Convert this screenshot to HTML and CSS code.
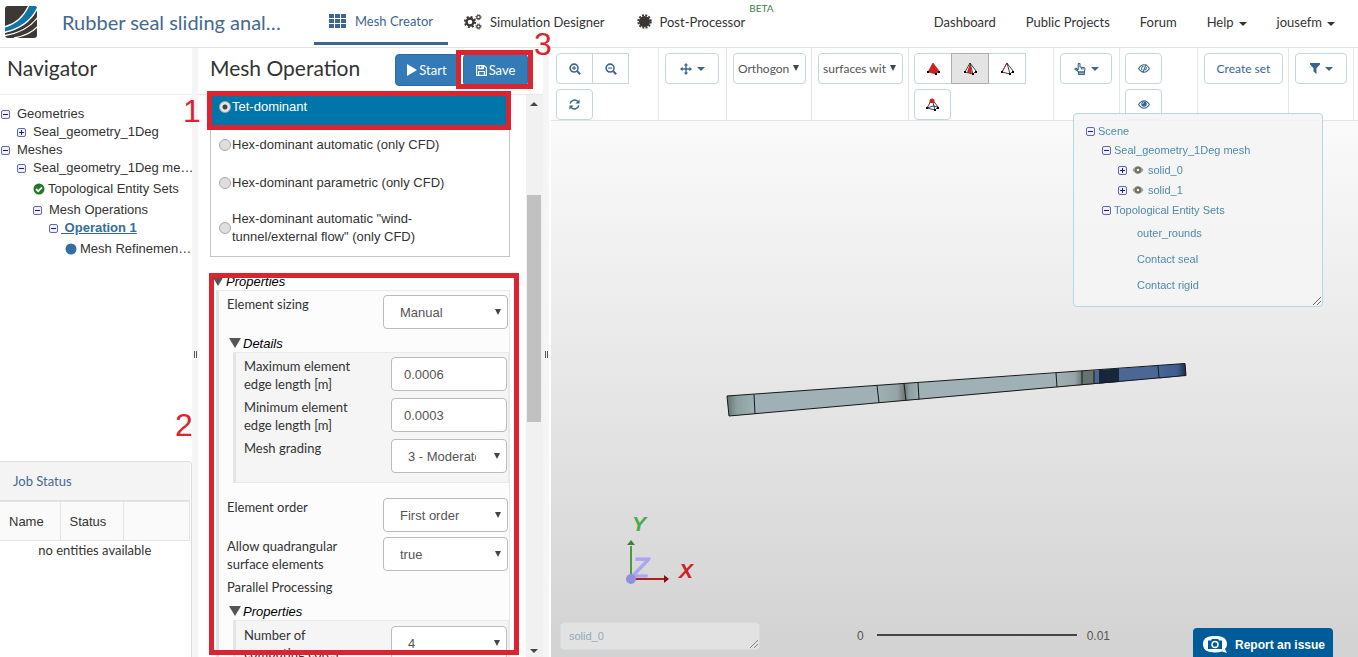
FILE: index.html
```html
<!DOCTYPE html>
<html lang="en">
<head>
<meta charset="utf-8">
<title>Mesh Creator</title>
<link rel="stylesheet" href="styles.css">
</head>
<body>
<svg class="defs" aria-hidden="true">
  <symbol id="minus" viewBox="0 0 9 9"><rect x=".5" y=".5" width="8" height="8" rx="1.5" fill="#eef0fb" stroke="#6668a8"/><path d="M2 4.5h5" stroke="#1d1d80"/></symbol>
  <symbol id="plus" viewBox="0 0 9 9"><rect x=".5" y=".5" width="8" height="8" rx="1.5" fill="#eef0fb" stroke="#6668a8"/><path d="M2 4.5h5M4.5 2v5" stroke="#1d1d80"/></symbol>
  <symbol id="eye" viewBox="0 0 14 10"><path d="M.6 5Q3.500.7 7 .7T13.400 5Q10.500 9.300 7 9.300T.6 5z" fill="none" stroke="currentColor" stroke-width="1.200"/><circle cx="7" cy="4.500" r="3.200" fill="currentColor"/><path d="M5.300 4.300A1.800 1.800 0 0 1 7 2.700" fill="none" stroke="#fff" stroke-width=".8"/></symbol>
  <symbol id="eye-solid" viewBox="0 0 14 10"><path d="M0 5Q3.500 0 7 0T14 5Q10.500 10 7 10T0 5z" fill="#a5a598"/><circle cx="7" cy="5" r="4" fill="#6f6f64"/><circle cx="7" cy="5" r="1.600" fill="#f2f2ee"/></symbol>
</svg>
<div class="app">
  <header class="topbar">
    <svg class="logo" viewBox="0 0 32 32"><defs><clipPath id="lc"><rect width="32" height="32" rx="3"/></clipPath></defs>
      <g clip-path="url(#lc)"><rect width="32" height="32" fill="#3d3835"/><path d="M24 -1Q16 17 -1 21V27Q24 21 33 1V-1z" fill="#1175a8"/>
      <g fill="none" stroke="#fff" stroke-width="1.300"><path d="M24 -1Q16 17 -1 21"/><path d="M33 1Q24 21 -1 26.500"/><path d="M33 11Q22 26 0 29.500"/><path d="M33 20Q25 29 9 32"/></g></g></svg>
    <a class="project" href="#">Rubber seal sliding anal…</a>
    <nav class="tabs">
      <a class="tab tab-mesh active" href="#"><svg width="17" height="14" viewBox="0 0 17 14" fill="#3b6690"><path d="M0 0h5v4H0zM6 0h5v4H6zM12 0h5v4h-5zM0 5h5v4H0zM6 5h5v4H6zM12 5h5v4h-5zM0 10h5v4H0zM6 10h5v4H6zM12 10h5v4h-5z"/></svg>Mesh Creator</a>
      <a class="tab tab-sim" href="#"><svg width="18" height="16" viewBox="0 0 18 16" fill="none" stroke="#3a3532"><circle cx="6" cy="8" r="3.500" stroke-width="2.400"/><circle cx="6" cy="8" r="5.200" stroke-width="1.800" stroke-dasharray="2.040 2.040"/><circle cx="14.500" cy="3.200" r="1.700" stroke-width="1.200"/><circle cx="14.500" cy="3.200" r="2.600" stroke-width="1" stroke-dasharray="1.020 1.020"/><circle cx="14.500" cy="12.500" r="1.700" stroke-width="1.200"/><circle cx="14.500" cy="12.500" r="2.600" stroke-width="1" stroke-dasharray="1.020 1.020"/></svg>Simulation Designer</a>
      <a class="tab tab-post" href="#"><svg width="15" height="15" viewBox="0 0 15 15"><circle cx="7.500" cy="7.500" r="5.600" fill="#3a3532"/><circle cx="7.500" cy="7.500" r="6.300" fill="none" stroke="#3a3532" stroke-width="1.800" stroke-dasharray="1.980 1.320"/></svg>Post-Processor<sup class="beta">BETA</sup></a>
    </nav>
    <nav class="links">
      <a href="#">Dashboard</a><a href="#">Public Projects</a><a href="#">Forum</a><a href="#">Help<i class="caret"></i></a><a href="#">jousefm<i class="caret"></i></a>
    </nav>
  </header>
  <main class="work">
    <aside class="side">
      <h1 class="heading">Navigator</h1>
      <div class="tree">
        <div class="node l0"><svg class="box"><use href="#minus"/></svg>Geometries</div>
        <div class="node l1"><svg class="box"><use href="#plus"/></svg>Seal_geometry_1Deg</div>
        <div class="node l0"><svg class="box"><use href="#minus"/></svg>Meshes</div>
        <div class="node l1"><svg class="box"><use href="#minus"/></svg>Seal_geometry_1Deg me…</div>
        <div class="node l2 leaf"><svg class="dot" viewBox="0 0 12 12"><circle cx="6" cy="6" r="5.500" fill="#1c7a24"/><path d="M3 6l2.200 2.200L9 4.300" fill="none" stroke="#fff" stroke-width="1.800"/></svg>Topological Entity Sets</div>
        <div class="node l2"><svg class="box"><use href="#minus"/></svg>Mesh Operations</div>
        <div class="node l3"><svg class="box"><use href="#minus"/></svg><a class="current" href="#">&nbsp;Operation 1</a></div>
        <div class="node l4 leaf"><svg class="dot" viewBox="0 0 12 12"><circle cx="6" cy="6" r="5.500" fill="#336da5"/></svg>Mesh Refinemen…</div>
      </div>
      <section class="jobs">
        <h2 class="jobs-title">Job Status</h2>
        <table class="jobs-table">
          <thead><tr><th class="c-name">Name</th><th class="c-status">Status</th><th></th></tr></thead>
          <tbody><tr><td colspan="3">no entities available</td></tr></tbody>
        </table>
      </section>
    </aside>
    <div class="splitter"><i></i></div>
    <section class="operation">
      <div class="op-head">
        <h1>Mesh Operation</h1>
        <button class="primary start"><svg width="10" height="12" viewBox="0 0 10 12"><path d="M0 0l10 6L0 12z" fill="#fff"/></svg>Start</button>
        <button class="primary save"><svg width="11" height="11" viewBox="0 0 11 11" fill="none" stroke="#fff" stroke-width="1.200"><path d="M.6.6h7.600l2.200 2.200v7.600H.6z"/><path d="M2.600 10V6.500h5.800V10M3 .6v3h4.400v-3M6 1v2"/></svg>Save</button>
      </div>
      <div class="op-body">
        <div class="op-scroll">
          <div class="types">
            <label class="type selected"><input type="radio" name="t" checked>Tet-dominant</label>
            <label class="type"><input type="radio" name="t">Hex-dominant automatic (only CFD)</label>
            <label class="type"><input type="radio" name="t">Hex-dominant parametric (only CFD)</label>
            <label class="type two"><input type="radio" name="t"><span>Hex-dominant automatic "wind-<br>tunnel/external flow" (only CFD)</span></label>
          </div>
          <details class="props" open>
            <summary>Properties</summary>
            <div class="group outer">
              <div class="row"><label for="sizing">Element sizing</label><span class="pick"><select id="sizing"><option>Manual</option></select></span></div>
              <details class="sub" open>
                <summary>Details</summary>
                <div class="group inner">
                  <div class="row"><label for="maxe">Maximum element edge length [m]</label><input id="maxe" type="text" value="0.0006"></div>
                  <div class="row"><label for="mine">Minimum element edge length [m]</label><input id="mine" type="text" value="0.0003"></div>
                  <div class="row"><label for="grad">Mesh grading</label><span class="pick"><select id="grad"><option>3 - Moderate</option></select></span></div>
                </div>
              </details>
              <div class="row order"><label for="order">Element order</label><span class="pick"><select id="order"><option>First order</option></select></span></div>
              <div class="row"><label for="quad">Allow quadrangular surface elements</label><span class="pick"><select id="quad"><option>true</option></select></span></div>
              <div class="plain">Parallel Processing</div>
              <details class="sub parallel" open>
                <summary>Properties</summary>
                <div class="group inner">
                  <div class="row"><label for="cores">Number of computing cores</label><span class="pick"><select id="cores"><option>4</option></select></span></div>
                </div>
              </details>
            </div>
          </details>
        </div>
        <div class="scrollbar"><i class="up"></i><i class="thumb"></i><i class="down"></i></div>
      </div>
    </section>
    <div class="splitter"><i></i></div>
    <section class="viewer">
      <div class="tools">
        <div class="tg g-zoom">
          <div class="btns">
            <button class="tb" aria-label="Zoom in"><svg width="12" height="12" viewBox="0 0 13 13" fill="none" stroke="#3b6690"><circle cx="5.500" cy="5.500" r="4.300" stroke-width="1.700"/><path d="M8.800 8.800l3.300 3.300" stroke-width="2.200"/><path d="M3.300 5.500h4.400M5.500 3.300v4.400" stroke-width="1.200"/></svg></button><button class="tb" aria-label="Zoom out"><svg width="12" height="12" viewBox="0 0 13 13" fill="none" stroke="#3b6690"><circle cx="5.500" cy="5.500" r="4.300" stroke-width="1.700"/><path d="M8.800 8.800l3.300 3.300" stroke-width="2.200"/><path d="M3.300 5.500h4.400" stroke-width="1.200"/></svg></button>
          </div>
          <button class="tb" aria-label="Refresh"><svg width="11" height="11" viewBox="0 0 12 12" fill="none" stroke="#3b6690" stroke-width="1.600"><path d="M1.200 5A5 5 0 0 1 9.700 2.700M10.800 7A5 5 0 0 1 2.300 9.300"/><path d="M11.500.5V5H7zM.5 11.500V7H5z" fill="#3b6690" stroke="none"/></svg></button>
        </div>
        <div class="tg g-move"><button class="tb wide" aria-label="Move"><svg width="12" height="12" viewBox="0 0 12 12"><path d="M6 0l2.200 2.600H3.800zM6 12l2.200-2.600H3.800zM0 6l2.600-2.200v4.400zM12 6L9.400 3.800v4.400z" fill="#3b6690"/><path d="M6 2v8M2 6h8" stroke="#3b6690" stroke-width="1.400"/></svg><i class="caret"></i></button></div>
        <div class="tg g-proj"><span class="tpick"><select aria-label="Projection"><option>Orthogon</option></select></span></div>
        <div class="tg g-surf"><span class="tpick"><select aria-label="Rendering"><option>surfaces wit</option></select></span></div>
        <div class="tg g-mesh">
          <div class="btns">
            <button class="tb" aria-label="Volumes"><svg width="13" height="13" viewBox="0 0 13 13"><path d="M6 1L1 10l8 2 3-3z" fill="#d2201c" stroke="#8c1512" stroke-width=".6"/><path d="M0 9h2v2H0zM8 11h2v2H8zM11 9h2v2h-2z"/></svg></button><button class="tb pressed" aria-label="Faces"><svg width="13" height="13" viewBox="0 0 13 13"><path d="M6 1L1 10l8 2 3-3z" fill="#fff" stroke="#111" stroke-width=".8"/><path d="M6 1L3 10.500l5 1.200z" fill="#d2201c"/><path d="M6 1l3 11" stroke="#111" stroke-width=".8"/><path d="M0 9h2v2H0zM8 11h2v2H8zM11 9h2v2h-2z"/></svg></button><button class="tb" aria-label="Edges"><svg width="13" height="13" viewBox="0 0 13 13"><path d="M6 1L1 10l8 2 3-3zM6 1l3 11" fill="none" stroke="#111" stroke-width=".8"/><path d="M6 1L1.500 9" stroke="#d2201c"/><path d="M0 9h2v2H0zM8 11h2v2H8zM11 9h2v2h-2z"/></svg></button>
          </div>
          <button class="tb" aria-label="Nodes"><svg width="13" height="13" viewBox="0 0 13 13"><path d="M6 1L1 10l8 2 3-3zM6 1l3 11M1 10l6-2 5 1" fill="none" stroke="#111" stroke-width=".8"/><path d="M3.500 3A2.500 2.500 0 0 1 8.500 3V5h-5z" fill="#d2201c"/><path d="M0 9h2v2H0zM8 11h2v2H8zM11 9h2v2h-2z"/></svg></button>
        </div>
        <div class="tg g-hand"><button class="tb wide" aria-label="Select"><svg width="12" height="12" viewBox="0 0 12 12" fill="none" stroke="#3b6690" stroke-width="1.100"><path d="M4.200 7V1.300a.9.9 0 0 1 1.800 0V4l4.200.8q.8.200.8 1.200L10.300 9H4.800L1 6.200Q.8 5 2.200 5.300L4.200 7"/><path d="M4.500 9h5.800v2.400H4.500z" fill="#3b6690" fill-opacity=".3"/><path d="M7.500 4.500v1.800M9 5v1.500"/></svg><i class="caret"></i></button></div>
        <div class="tg g-eye">
          <button class="tb" aria-label="Hide"><svg width="12" height="9" viewBox="0 0 14 10" fill="none" stroke="#3b6690" stroke-width="1.200"><path d="M.6 5Q3.500.7 7 .7T13.400 5Q10.500 9.300 7 9.300T.6 5zM9.500 0l-4 10M6.500 2.500A2.600 2.600 0 0 0 5 7M9.500 3.500A2.800 2.800 0 0 1 7.800 7"/></svg></button>
          <button class="tb" aria-label="Show"><svg class="blue" width="12" height="9"><use href="#eye"/></svg></button>
        </div>
        <div class="tg g-set"><button class="tb text">Create set</button></div>
        <div class="tg g-filter"><button class="tb wide" aria-label="Filter"><svg width="10" height="11" viewBox="0 0 10 11"><path d="M0 0h10v1.500L6.500 5.200V11L3.500 8.500V5.200L0 1.500z" fill="#3b6690"/></svg><i class="caret"></i></button></div>
      </div>
      <div class="canvas">
        <svg class="model" width="475" height="70" viewBox="0 0 475 70">
          <defs>
            <linearGradient id="m1"><stop offset="0" stop-color="#66716f"/><stop offset=".35" stop-color="#8ba09f"/><stop offset="1" stop-color="#9fb1b4"/></linearGradient>
            <linearGradient id="m2"><stop offset="0" stop-color="#9fb1b4"/><stop offset=".7" stop-color="#95a5a7"/><stop offset="1" stop-color="#65706f"/></linearGradient>
            <linearGradient id="m3"><stop offset="0" stop-color="#4b6796"/><stop offset=".7" stop-color="#3f5b90"/><stop offset="1" stop-color="#1c2c48"/></linearGradient>
          </defs>
          <path d="M7 41L374 15.500V29L9 61z" fill="#9fb1b4"/>
          <path d="M7 41l27-1.500 1 19.500-26 2z" fill="url(#m1)"/>
          <path d="M157 30.500l27-2 2 17-27 2z" fill="url(#m2)"/>
          <path d="M184 28.500l14-1 1 17-13 1z" fill="url(#m1)"/>
          <path d="M336 18l26-2 1 14-26 2z" fill="url(#m2)"/>
          <path d="M362 16l12-.5V29l-12 1z" fill="#66736f"/>
          <path d="M374 15.500l91-7 1 12L374 29z" fill="#4b6796"/>
          <path d="M379 15l20-1.500V27l-20 1.500z" fill="#17263a"/>
          <path d="M438 11l27-2.500 1 12-27 3z" fill="url(#m3)"/>
          <path d="M7 41L465 8.500l1 12L9 61zM34 39.500L35 59M157 30.500l2 17M184 28.500l2 17M198 27.500l1 17M336 18l1 14M438 11l1 12M362 16v14M374 15.500V29" fill="none" stroke="#15191a"/>
        </svg>
        <svg class="axes" width="80" height="80" viewBox="0 0 80 80">
          <path d="M11 69V36" stroke="#4a9a4a" stroke-width="2"/><path d="M11 30l4 5H7z" fill="#3f7f42"/>
          <path d="M11 69h35" stroke="#b01e22" stroke-width="2"/><path d="M49 69l-5-4v8z" fill="#7b1518"/>
          <text class="ax" x="12" y="21" fill="#48ac4a">Y</text><text class="ax" x="59" y="68" fill="#cc2222">X</text>
          <text class="az" x="12" y="67">Z</text><circle cx="11" cy="69" r="5" fill="#908fe0"/>
        </svg>
        <div class="scene">
          <div class="sn s0"><svg class="box"><use href="#minus"/></svg>Scene</div>
          <div class="sn s1"><svg class="box"><use href="#minus"/></svg>Seal_geometry_1Deg mesh</div>
          <div class="sn s2"><svg class="box"><use href="#plus"/></svg><svg class="seye"><use href="#eye-solid"/></svg>solid_0</div>
          <div class="sn s2"><svg class="box"><use href="#plus"/></svg><svg class="seye"><use href="#eye-solid"/></svg>solid_1</div>
          <div class="sn s1"><svg class="box"><use href="#minus"/></svg>Topological Entity Sets</div>
          <div class="sn s3">outer_rounds</div><div class="sn s3">Contact seal</div><div class="sn s3">Contact rigid</div>
          <svg class="grip" viewBox="0 0 8 8"><path d="M0 8l8-8M4 8l4-4" stroke="#666"/></svg>
        </div>
        <div class="status">solid_0<svg class="grip" viewBox="0 0 8 8"><path d="M0 8l8-8M4 8l4-4" stroke="#888"/></svg></div>
        <div class="scale"><span>0</span><i></i><span>0.01</span></div>
        <button class="report"><svg width="24" height="18" viewBox="0 0 24 18"><path d="M12 0C18 0 24 1.500 24 8q0 3-2 5l2 4-5-1.500Q16 16.500 12 16.500 0 16.500 0 8T12 0z" fill="#fff"/><path d="M5 4.500h3l1-1.500h6l1 1.500h3v8.500H5z" fill="#005b99"/><circle cx="12" cy="8.500" r="3" fill="none" stroke="#fff" stroke-width="1.500"/></svg>Report an issue</button>
      </div>
    </section>
  </main>
  <div class="mark m-type"></div><div class="mark m-props"></div><div class="mark m-save"></div>
  <span class="num n1">1</span><span class="num n2">2</span><span class="num n3">3</span>
</div>
</body>
</html>
```
FILE: styles.css
```css
* { box-sizing: border-box; }
body { margin: 0; font: 13px/18px Lato, sans-serif; color: #333; background: #fff; overflow: hidden; }
a { color: inherit; text-decoration: none; }
button, input, select { font: inherit; color: inherit; margin: 0; }
svg { display: block; flex: none; }
i { display: block; flex: none; }
.defs { position: absolute; width: 0; height: 0; }
.app { position: relative; height: 100vh; display: flex; flex-direction: column; overflow: hidden; }

.topbar { flex: none; height: 48px; border-bottom: 1px solid #e2e2e2; display: flex; align-items: stretch; padding: 0 23px 0 5px; }
.logo { width: 32px; height: 32px; margin-top: 6px; }
.project { margin-left: 25px; width: 252px; font-size: 20px; line-height: 44px; color: #44698f; white-space: nowrap; }
.tabs { display: flex; font-size: 13px; }
.tab { display: flex; align-items: center; height: 45px; padding: 0 16px 2px; white-space: nowrap; }
.tab svg { margin-right: 8px; }
.tab.active { color: #3b6690; border-bottom: 3px solid #3b6690; padding: 0 15px; }
.tab.active svg { margin-right: 9px; }
.beta { align-self: flex-start; margin: 0 0 0 4px; font-size: 10px; line-height: 16px; color: #3f8048; }
.links { display: flex; margin-left: auto; gap: 30px; font-size: 13px; line-height: 44px; white-space: nowrap; }
.links a { display: flex; align-items: center; height: 44px; }
.caret { width: 0; height: 0; border: 4px solid transparent; border-top-color: currentColor; border-bottom: 0; margin-left: 5px; }
.links .caret { margin-top: 3px; }

.work { flex: 1; min-height: 0; display: flex; }
.side { flex: 0 0 192px; display: flex; flex-direction: column; min-width: 0; }
.heading { margin: 0; padding-left: 7px; height: 47px; line-height: 40px; font-size: 21px; font-weight: 400; border-bottom: 1px solid #eee; }
.tree { flex: 1; padding-top: 10px; font-family: "Liberation Sans", sans-serif; }
.node { display: flex; align-items: center; height: 18px; white-space: nowrap; }
.node.leaf { height: 24px; }
.box { width: 9px; height: 9px; margin-right: 7px; }
.dot { width: 12px; height: 12px; margin-right: 3px; }
.l0 { padding-left: 1px; }
.l1 { padding-left: 17px; }
.l2 { padding-left: 33px; }
.l3 { padding-left: 49px; }
.l3 .box { margin-right: 3px; }
.l4 { padding-left: 65px; }
.current { color: #336da0; font-weight: 700; text-decoration: underline; }
.jobs { flex: none; height: 196px; border: 1px solid #ddd; border-left: 0; border-bottom: 0; border-radius: 0 4px 0 0; padding-right: 1px; }
.jobs-title { margin: 0; height: 39px; padding-left: 13px; line-height: 39px; font-size: 13px; font-weight: 400; color: #44698f; background: #f4f4f4; border-bottom: 1px solid #ddd; }
.jobs-table { width: 100%; border-collapse: collapse; }
.jobs-table th { height: 39px; padding: 0 9px; text-align: left; font: 400 13px "Liberation Sans", sans-serif; background: #fafafa; border: 1px solid #e5e5e5; border-left: 0; }
.c-name { width: 60px; }
.c-status { width: 63px; }
.jobs-table td { padding: 0; text-align: center; }

.splitter { flex: 0 0 6px; background: #f5f5f5; display: flex; align-items: center; justify-content: center; padding-top: 4px; }
.splitter i { width: 3px; height: 7px; border: solid #555; border-width: 0 1px; }

.operation { flex: 0 0 345px; display: flex; flex-direction: column; min-width: 0; }
.op-head { flex: none; height: 47px; border-bottom: 1px solid #e8e8e8; display: flex; align-items: center; padding: 0 15px 2px 12px; }
.op-head h1 { margin: 0 auto 4px 0; font-size: 21px; font-weight: 400; white-space: nowrap; }
.primary { display: flex; align-items: center; justify-content: center; gap: 2px; height: 32px; padding: 0; color: #fff; background: #337ab7; border: 1px solid #2e6da4; border-radius: 4px; }
.start { width: 64px; }
.save { width: 65px; margin-left: 4px; }
.op-body { flex: 1; min-height: 0; display: flex; }
.op-scroll { flex: 1; min-width: 0; overflow: hidden; padding: 0 16px 0 12px; }
.types { border: 1px solid #c4c4c4; border-top: 0; padding-bottom: 2px; font-family: "Liberation Sans", sans-serif; }
.type { display: flex; align-items: center; height: 38px; padding-left: 8px; }
.type.selected { height: 31px; padding-bottom: 8px; color: #fff; background: #0075a9; }
.type.two { height: 52px; }
.type input { appearance: none; width: 12px; height: 12px; flex: none; margin-right: 1px; border: 1px solid #aaa; border-radius: 50%; background: #dedede; }
.type input:checked { background: radial-gradient(circle, #444 0 2px, #e6e6e6 3px); }
.props { margin: 15px 0 0 6px; }
summary { display: flex; align-items: center; height: 18px; color: #000; font: italic 13px "Liberation Sans", sans-serif; list-style: none; }
summary::before { content: ""; border: 6px solid transparent; border-top: 10px solid #555; border-bottom: 0; margin-right: 2px; }
.props > summary { margin-left: -4px; }
.group { border: 1px solid #e9e9e9; border-left: 3px solid #e4e4e4; }
.outer { background: #fcfcfc; padding: 4px 0 0 8px; }
.row { display: flex; justify-content: space-between; align-items: flex-start; height: 39px; padding-right: 1px; }
.row label { width: 124px; }
.row input { height: 34px; width: 116px; padding: 0 12px; font: 13px "Liberation Sans", sans-serif; color: #555; background: #fff; border: 1px solid #bbb; border-radius: 4px; }
.pick { position: relative; width: 125px; height: 34px; overflow: hidden; background: #fff; border: 1px solid #bbb; border-radius: 4px; }
.pick select { appearance: none; width: calc(100% - 30px); height: 100%; border: 0; padding: 0 0 0 16px; background: none; font: 13px "Liberation Sans", sans-serif; color: #555; }
.pick::after, .tpick::after { content: ""; position: absolute; right: 6px; top: 13px; border: 3px solid transparent; border-top: 6px solid #444; border-bottom: 0; }
.sub { margin-left: 6px; }
.sub > summary { margin-left: -4px; }
.outer > .sub:first-of-type { margin-bottom: 15px; }
.inner { background: #f5f5f5; padding: 4px 0 2px 8px; }
.inner .row { height: 41px; padding-right: 1px; }
.inner .pick { width: 116px; }
.plain { height: 26px; padding-top: 2px; }
.parallel .inner { padding-top: 5px; }
.scrollbar { flex: 0 0 17px; display: flex; flex-direction: column; background: #f1f1f1; padding: 7px 2px 4px 1px; }
.up, .down { width: 8px; height: 4px; align-self: center; border: 4px solid transparent; border-top: 0; border-bottom: 4px solid #444; }
.down { border-top: 4px solid #444; border-bottom: 0; margin-top: auto; }
.thumb { height: 227px; margin-top: 89px; background: #c1c1c1; }

.viewer { flex: 1; min-width: 0; display: flex; flex-direction: column; margin-left: 2px; }
.tools { flex: none; height: 73px; display: flex; border-bottom: 1px solid #e4e4e4; font-size: 12px; }
.tg { display: flex; flex-wrap: wrap; align-content: flex-start; gap: 5px; padding: 5px 5px 0; border-right: 1px solid #e6e6e6; }
.g-zoom { width: 108px; }
.g-move { width: 68px; padding-left: 6px; }
.g-proj { width: 85px; padding-left: 6px; }
.g-surf { width: 97px; padding-left: 6px; }
.g-mesh { width: 145px; }
.g-hand { width: 66px; padding-left: 6px; }
.g-eye { width: 78px; padding-right: 30px; }
.g-set { width: 91px; padding-left: 6px; }
.g-filter { width: 65px; padding-left: 6px; }
.btns { display: flex; }
.tb { display: flex; align-items: center; justify-content: center; width: 37px; height: 31px; padding: 0; color: #3b6690; background: #fff; border: 1px solid #c3d6e0; border-radius: 4px; }
.btns .tb { border-radius: 0; margin-right: -1px; width: 38px; }
.g-zoom .btns .tb { width: 37px; }
.btns .tb:first-child { border-radius: 4px 0 0 4px; }
.tb.pressed { background: #e4e4e4; border-color: #adadad; z-index: 1; }
.tb.wide { width: 52px; }
.g-move .wide { width: 54px; }
.tb.text { width: 80px; }
.tpick { position: relative; flex: 1; height: 31px; border: 1px solid #c3d6e0; border-radius: 4px; }
.tpick select { appearance: none; width: 100%; height: 100%; border: 0; padding: 0 0 0 4px; background: none; color: #555; }
.tpick::after { top: 11px; right: 6px; }
.blue { color: #3b6690; }

.canvas { flex: 1; position: relative; overflow: hidden; background: linear-gradient(#fafafa, #d2d2d2); font-family: "Liberation Sans", sans-serif; }
.model { position: absolute; left: 169px; top: 234px; }
.axes { position: absolute; left: 69px; top: 389px; }
.ax { font: italic 700 21px "Liberation Sans", sans-serif; }
.az { font: italic 28px "Liberation Sans", sans-serif; fill: #aaa6f2; stroke: #aaa6f2; }
.scene { position: fixed; right: 35px; top: 113px; width: 250px; height: 194px; padding: 8px 12px; font: 11px/18px "Liberation Sans", sans-serif; color: #4f8ba8; background: rgba(245, 245, 245, .85); border: 1px solid #b7d7e0; border-radius: 4px; }
.sn { display: flex; align-items: center; height: 20px; white-space: nowrap; }
.s0 { height: 18px; }
.scene .box { margin-right: 3px; }
.s1 { padding-left: 16px; }
.s2 { padding-left: 32px; }
.s3 { padding-left: 51px; height: 26px; }
.seye { width: 12px; height: 8px; margin: 0 4px 0 2px; }
.grip { position: absolute; right: 1px; bottom: 1px; width: 8px; height: 8px; }
.status { position: absolute; left: 9px; bottom: 7px; width: 200px; height: 28px; padding-left: 8px; font-size: 11px; line-height: 26px; color: #93aab8; background: #e2e2e2; border: 1px solid #d3dde0; border-radius: 4px; }
.scale { position: absolute; left: 306px; bottom: 12px; display: flex; gap: 10px; align-items: center; font-size: 12px; color: #555; }
.scale i { width: 200px; height: 2px; margin: 0 0 3px 3px; background: #444; }
.report { position: absolute; right: 25px; bottom: 0; width: 140px; height: 29px; display: flex; align-items: center; gap: 8px; padding: 4px 0 0 10px; font: 700 12px "Liberation Sans", sans-serif; color: #fff; background: #005b99; border: 0; border-radius: 4px 4px 0 0; white-space: nowrap; }

.mark { position: absolute; border: 5px solid #dc2330; z-index: 2; }
.m-type { left: 207px; top: 91px; width: 304px; height: 39px; }
.m-props { left: 209px; top: 273px; width: 310px; bottom: 2px; }
.m-save { left: 456px; top: 50px; width: 77px; height: 39px; }
.num { position: absolute; z-index: 2; font: 32px/32px "Liberation Sans", sans-serif; color: #dc2330; }
.n1 { left: 183px; top: 95px; }
.n2 { left: 175px; top: 409px; }
.n3 { left: 534px; top: 28px; }
```
